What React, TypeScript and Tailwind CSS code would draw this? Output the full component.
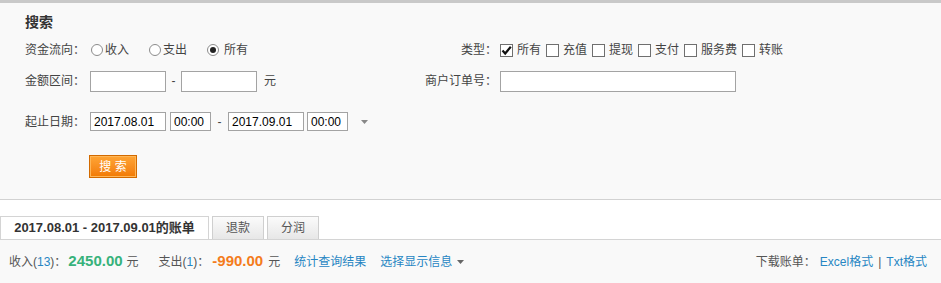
import React from "react";

const font = "font-['Liberation_Sans','Noto_Sans_CJK_SC',sans-serif]";

function Radio({ checked = false, label }: { checked?: boolean; label: string }) {
  return (
    <span className="flex items-center">
      <span className="flex h-[12px] w-[12px] items-center justify-center rounded-full border border-[#8c8c8c] bg-white">
        {checked && <span className="h-[6px] w-[6px] rounded-full bg-[#222]" />}
      </span>
      <span className={checked ? "ml-[5px]" : "ml-[2px]"}>{label}</span>
    </span>
  );
}

function Check({ checked = false, label }: { checked?: boolean; label: string }) {
  return (
    <span className="mr-[5px] flex items-center">
      <span className="relative h-[13px] w-[13px] border border-[#6f6f6f] bg-white">
        {checked && (
          <svg viewBox="0 0 13 13" className="absolute -left-px -top-px h-[13px] w-[13px]">
            <path d="M2.5 6.5 L5.2 9.5 L10.8 2.8" fill="none" stroke="#111" strokeWidth="2.2" />
          </svg>
        )}
      </span>
      <span className="ml-[4px]">{label}</span>
    </span>
  );
}

function Box({ w, h, value = "" }: { w: string; h: string; value?: string }) {
  return (
    <div className={`${w} ${h} flex items-center border border-[#a3a3a3] bg-white pl-[3px] text-[12px] text-black`}>
      {value}
    </div>
  );
}

export default function App() {
  return (
    <div className={`${font} min-h-[283px] w-full bg-white text-[12px] text-[#444]`}>
      {/* search panel */}
      <div className="border-t-[3px] border-b border-t-[#c9c9c9] border-b-[#d2d2d2] bg-[#f9f9f9] pb-[21px] pl-[25px] pt-[5px]">
        <div className="flex h-[28px] items-center text-[14px] font-bold text-[#333]">搜索</div>

        <div className="flex h-[28px] items-center">
          <div className="flex w-[375px] items-center">
            <span className="w-[65px]">资金流向：</span>
            <span className="ml-[1px] flex items-center gap-[20px]">
              <Radio label="收入" />
              <Radio label="支出" />
              <Radio checked label="所有" />
            </span>
          </div>
          <div className="flex items-center">
            <span className="w-[97px] text-right">类型：</span>
            <div className="ml-[3px] flex items-center">
              <Check checked label="所有" />
              <Check label="充值" />
              <Check label="提现" />
              <Check label="支付" />
              <Check label="服务费" />
              <Check label="转账" />
            </div>
          </div>
        </div>

        <div className="flex h-[34px] items-center">
          <div className="flex w-[375px] items-center">
            <span className="w-[65px]">金额区间：</span>
            <Box w="w-[76px]" h="h-[21px]" />
            <span className="w-[15px] text-center">-</span>
            <Box w="w-[76px]" h="h-[21px]" />
            <span className="ml-[7px]">元</span>
          </div>
          <div className="flex items-center">
            <span className="w-[97px] text-right">商户订单号：</span>
            <div className="ml-[3px]">
              <Box w="w-[236px]" h="h-[21px]" />
            </div>
          </div>
        </div>

        <div className="mt-[3px] flex h-[41px] items-center">
          <span className="w-[65px]">起止日期：</span>
          <Box w="w-[76px]" h="h-[19px]" value="2017.08.01" />
          <span className="ml-[4px]">
            <Box w="w-[41px]" h="h-[19px]" value="00:00" />
          </span>
          <span className="w-[17px] text-center">-</span>
          <Box w="w-[76px]" h="h-[19px]" value="2017.09.01" />
          <span className="ml-[3px]">
            <Box w="w-[41px]" h="h-[19px]" value="00:00" />
          </span>
          <svg viewBox="0 0 7 4" className="ml-[13px] h-[4px] w-[7px]">
            <path d="M0 0 H7 L3.5 4 Z" fill="#888" />
          </svg>
        </div>

        <button className="ml-[64px] mt-[13px] flex h-[23px] w-[48px] items-center justify-center border border-[#d26a00] bg-gradient-to-b from-[#ffa534] to-[#f27a00] text-[12px] text-white shadow-[inset_0_0_0_1px_#ffb657]">
          搜 索
        </button>
      </div>

      {/* tabs */}
      <div className="mt-[16px] flex h-[24px] items-end border-b border-[#d4d4d4]">
        <div className="flex h-[23px] w-[209px] items-center justify-center border-l border-r border-t border-[#d4d4d4] bg-white text-[13px] font-bold text-[#333]">
          2017.08.01 - 2017.09.01的账单
        </div>
        <div className="ml-[3px] flex h-[23px] w-[52px] items-center justify-center border-l border-r border-t border-[#cfcfcf] bg-gradient-to-b from-[#fbfbfb] to-[#e7e7e7] text-[#555]">
          退款
        </div>
        <div className="ml-[3px] flex h-[23px] w-[52px] items-center justify-center border-l border-r border-t border-[#cfcfcf] bg-gradient-to-b from-[#fbfbfb] to-[#e7e7e7] text-[#555]">
          分润
        </div>
      </div>

      {/* summary */}
      <div className="flex h-[43px] items-center bg-[#f9f9f9] pl-[9px] pr-[14px] text-[#555]">
        <span>
          收入(<span className="text-[#2786c3]">13</span>)：
        </span>
        <span className="ml-[2px] text-[15px] font-bold text-[#37b27b]">2450.00</span>
        <span className="ml-[4px]">元</span>
        <span className="ml-[20px]">
          支出(<span className="text-[#2786c3]">1</span>)：
        </span>
        <span className="ml-[3px] text-[15px] font-bold text-[#f47c1c]">-990.00</span>
        <span className="ml-[5px]">元</span>
        <span className="ml-[14px] text-[#2786c3]">统计查询结果</span>
        <span className="ml-[14px] flex items-center text-[#2786c3]">
          选择显示信息
          <svg viewBox="0 0 7 4" className="ml-[5px] h-[4px] w-[7px]">
            <path d="M0 0 H7 L3.5 4 Z" fill="#666" />
          </svg>
        </span>
        <span className="ml-auto">下载账单：</span>
        <span className="ml-[4px] text-[#2786c3]">Excel格式</span>
        <span className="mx-[5px] text-[#555]">|</span>
        <span className="text-[#2786c3]">Txt格式</span>
      </div>
    </div>
  );
}
